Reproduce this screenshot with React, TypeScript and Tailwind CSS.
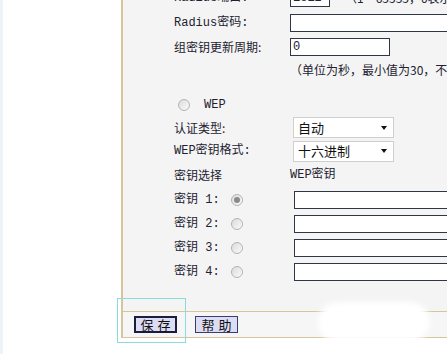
import React from "react";

const label = "w-[116px] shrink-0 whitespace-nowrap";

function Radio({ checked = false }: { checked?: boolean }) {
  return (
    <span className="inline-flex h-[12px] w-[12px] shrink-0 items-center justify-center rounded-full border border-[#b4b4b4] bg-gradient-to-br from-[#dcdcdc] to-[#fafafa]">
      {checked && <span className="h-[6px] w-[6px] rounded-full bg-[#8a8a8a]" />}
    </span>
  );
}

function TextBox({ w, value = "" }: { w: string; value?: string }) {
  return (
    <div
      className={`${w} flex h-[18px] shrink-0 items-center border border-[#2e3648] bg-white pl-[2px] text-[12px] leading-none`}
    >
      {value}
    </div>
  );
}

function Select({ value }: { value: string }) {
  return (
    <div className="ml-[3px] flex h-[21px] w-[101px] items-center justify-between border border-[#cfcfcf] bg-white pl-[4px] pr-[6px] text-[13px] font-['Noto_Sans_CJK_SC',sans-serif] text-[#111]">
      <span>{value}</span>
      <span className="h-0 w-0 border-x-[3.5px] border-t-[4px] border-x-transparent border-t-[#111]" />
    </div>
  );
}

function KeyRow({ n, checked }: { n: number; checked?: boolean }) {
  return (
    <div className="flex h-[24px] items-center">
      <span className="w-[57px] shrink-0 whitespace-nowrap">密钥 {n}:</span>
      <Radio checked={checked} />
      <div className="ml-[51px] flex-1">
        <TextBox w="w-[200px]" />
      </div>
    </div>
  );
}

export default function App() {
  return (
    <div className="relative flex h-[354px] w-[447px] overflow-hidden bg-white font-['Liberation_Mono','Noto_Sans_CJK_SC',monospace] text-[12px] text-[#1c2230]">
      <div className="w-[121px] shrink-0">
        <div className="h-full w-[3px] bg-[#eef3f9]" />
      </div>

      <div className="flex min-w-0 flex-1 flex-col">
        <div className="h-[311px] overflow-hidden border-l-2 border-[#d8c49c] bg-[#f4f4f4] pl-[51px]">
          <div className="mt-[-15px] flex h-[25px] items-center">
            <span className={label}>Radius端口:</span>
            <TextBox w="w-[40px]" value="1812" />
            <span className="ml-[15px] whitespace-nowrap font-['Noto_Sans_CJK_SC',sans-serif]">（1－65535，0表示默认端口）</span>
          </div>
          <div className="flex h-[25px] items-center">
            <span className={label}>Radius密码:</span>
            <TextBox w="w-[200px]" />
          </div>
          <div className="flex h-[24px] items-center">
            <span className={`${label} font-['Noto_Sans_CJK_SC',sans-serif]`}>组密钥更新周期:</span>
            <TextBox w="w-[100px]" value="0" />
          </div>
          <div className="flex h-[22px] items-center pl-[116px] whitespace-nowrap font-['Noto_Sans_CJK_SC',sans-serif]">
            （单位为秒，最小值为30，不更新则为0）
          </div>
          <div className="h-[13px]" />
          <div className="flex h-[22px] items-center pl-[4px]">
            <Radio />
            <span className="ml-[14px]">WEP</span>
          </div>
          <div className="flex h-[23px] items-center">
            <span className={`${label} font-['Noto_Sans_CJK_SC',sans-serif]`}>认证类型:</span>
            <Select value="自动" />
          </div>
          <div className="flex h-[24px] items-center">
            <span className={label}>WEP密钥格式:</span>
            <Select value="十六进制" />
          </div>
          <div className="flex h-[25px] items-center pb-[2px]">
            <span className={`${label} font-['Noto_Sans_CJK_SC',sans-serif]`}>密钥选择</span>
            <span>WEP密钥</span>
          </div>
          <KeyRow n={1} checked />
          <KeyRow n={2} />
          <KeyRow n={3} />
          <KeyRow n={4} />
        </div>

        <div className="flex h-[27px] items-center gap-[18px] border-y border-l-2 border-[#d8c49c] bg-[#f6f6f6] pl-[11px] font-['Noto_Sans_CJK_SC',sans-serif] text-[13px] text-[#111]">
          <button className="flex h-[17px] w-[43px] items-center justify-center border-2 border-[#1c1c3c] bg-[#dcdcf4] leading-none tracking-[4px] pl-[4px]">
            保存
          </button>
          <button className="flex h-[17px] w-[43px] items-center justify-center border border-[#3c3c6c] bg-[#dcdcf4] leading-none tracking-[4px] pl-[4px]">
            帮助
          </button>
        </div>
      </div>

      <div className="absolute left-[117px] top-[298px] h-[45px] w-[69px] border border-[#8adcdc]" />
      <div className="absolute left-[318px] top-[302px] h-[40px] w-[112px] rounded-full bg-white blur-[3px]" />
    </div>
  );
}
